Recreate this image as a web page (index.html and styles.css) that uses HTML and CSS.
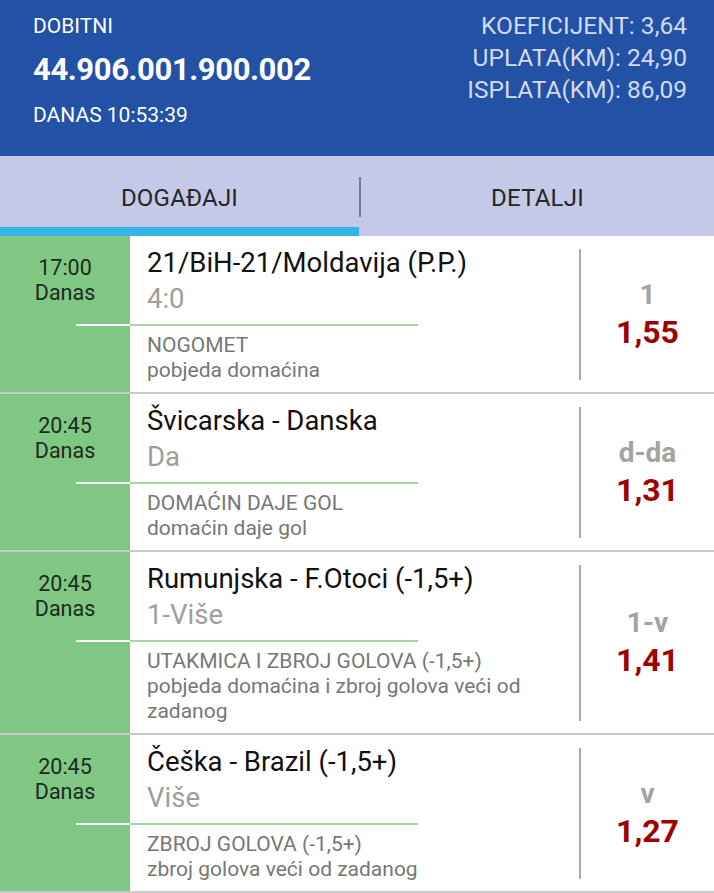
FILE: index.html
```html
<!DOCTYPE html>
<html lang="bs">
<head>
    <meta charset="UTF-8">
    <title>Listić</title>
    <link rel="stylesheet" href="styles.css">
</head>
<body>
    <div class="header">
        <div class="ticket">
            <div class="ticket-label">DOBITNI</div>
            <div class="ticket-number">44.906.001.900.002</div>
            <div class="ticket-date">DANAS 10:53:39</div>
        </div>
        <div class="totals">
            <div>KOEFICIJENT: 3,64</div>
            <div>UPLATA(KM): 24,90</div>
            <div>ISPLATA(KM): 86,09</div>
        </div>
    </div>

    <div class="tabs">
        <div class="tab active">DOGAĐAJI</div>
        <div class="tab-divider"></div>
        <div class="tab">DETALJI</div>
    </div>

    <div class="list">
        <div class="event">
            <div class="time">17:00<br>Danas</div>
            <div class="head">
                <div class="match">21/BiH-21/Moldavija (P.P.)</div>
                <div class="pick">4:0</div>
            </div>
            <div class="odds">
                <div class="odds-type">1</div>
                <div class="odds-value">1,55</div>
            </div>
            <div class="time-pad"></div>
            <div class="info">
                <div class="market">NOGOMET</div>
                <div class="desc">pobjeda domaćina</div>
            </div>
        </div>

        <div class="event">
            <div class="time">20:45<br>Danas</div>
            <div class="head">
                <div class="match">Švicarska - Danska</div>
                <div class="pick">Da</div>
            </div>
            <div class="odds">
                <div class="odds-type">d-da</div>
                <div class="odds-value">1,31</div>
            </div>
            <div class="time-pad"></div>
            <div class="info">
                <div class="market">DOMAĆIN DAJE GOL</div>
                <div class="desc">domaćin daje gol</div>
            </div>
        </div>

        <div class="event">
            <div class="time">20:45<br>Danas</div>
            <div class="head">
                <div class="match">Rumunjska - F.Otoci (-1,5+)</div>
                <div class="pick">1-Više</div>
            </div>
            <div class="odds">
                <div class="odds-type">1-v</div>
                <div class="odds-value">1,41</div>
            </div>
            <div class="time-pad"></div>
            <div class="info">
                <div class="market">UTAKMICA I ZBROJ GOLOVA (-1,5+)</div>
                <div class="desc">pobjeda domaćina i zbroj golova veći od zadanog</div>
            </div>
        </div>

        <div class="event">
            <div class="time">20:45<br>Danas</div>
            <div class="head">
                <div class="match">Češka - Brazil (-1,5+)</div>
                <div class="pick">Više</div>
            </div>
            <div class="odds">
                <div class="odds-type">v</div>
                <div class="odds-value">1,27</div>
            </div>
            <div class="time-pad"></div>
            <div class="info">
                <div class="market">ZBROJ GOLOVA (-1,5+)</div>
                <div class="desc">zbroj golova veći od zadanog</div>
            </div>
        </div>
    </div>
</body>
</html>
```

FILE: styles.css
```css
body {
    margin: 0;
    background-color: #fff;
    font-family: Roboto, 'Noto Sans', sans-serif;
    overflow: hidden;
}
.header {
    height: 156px;
    box-sizing: border-box;
    background-color: #2251a5;
    display: flex;
    justify-content: space-between;
    padding: 0 27px 0 33px;
}
.ticket {
    color: #fff;
    padding-top: 14px;
}
.ticket-label {
    font-size: 21px;
    line-height: 24px;
}
.ticket-number {
    font-size: 31px;
    font-weight: bold;
    letter-spacing: -0.4px;
    line-height: 40px;
    margin-top: 12px;
}
.ticket-date {
    font-size: 21px;
    line-height: 24px;
    margin-top: 13px;
}
.totals {
    color: #d3d9f0;
    font-size: 24.5px;
    line-height: 32px;
    text-align: right;
    padding-top: 10px;
}
.tabs {
    display: grid;
    grid-template-columns: 359px 2px 1fr;
    background-color: #c5c9e8;
}
.tab {
    text-align: center;
    font-size: 24px;
    line-height: 28px;
    color: #262626;
    letter-spacing: 0.2px;
    padding: 28px 0 15px;
    border-bottom: 9px solid transparent;
}
.tab.active {
    border-bottom-color: #33b5e5;
}
.tab-divider {
    background-color: #7b7e90;
    height: 40px;
    margin-top: 21px;
}
.event {
    display: grid;
    grid-template-columns: 130px 1fr 135px;
    grid-template-rows: auto 1fr;
    border-bottom: 2px solid #c9c9c9;
}
.time {
    grid-row: 1;
    grid-column: 1;
    background: linear-gradient(#fff, #fff) no-repeat right bottom / 54px 2px, #81c784;
    text-align: center;
    font-size: 21.5px;
    line-height: 25px;
    color: #1c2b1c;
    padding-top: 19px;
}
.time-pad {
    grid-row: 2;
    grid-column: 1;
    background-color: #81c784;
}
.head {
    grid-row: 1;
    grid-column: 2;
    padding: 9px 0 9px 17px;
    background: linear-gradient(#a5d6a7, #a5d6a7) no-repeat left bottom / 288px 2px;
}
.match {
    font-size: 27.5px;
    line-height: 36px;
    color: #111;
}
.pick {
    font-size: 27.5px;
    line-height: 36px;
    color: #9e9e9e;
}
.info {
    grid-row: 2;
    grid-column: 2;
    padding: 7px 20px 9px 17px;
    font-size: 21px;
    line-height: 25px;
    color: #777;
}
.odds {
    grid-row: 1 / 3;
    grid-column: 3;
    margin: 13px 0 12px;
    border-left: 2px solid #ababab;
    display: flex;
    flex-direction: column;
    justify-content: center;
    align-items: center;
    font-weight: bold;
    padding-bottom: 2px;
}
.odds-type {
    font-size: 28px;
    line-height: 36px;
    color: #a3a3a3;
}
.odds-value {
    font-size: 32px;
    line-height: 38px;
    color: #a00000;
}
```
